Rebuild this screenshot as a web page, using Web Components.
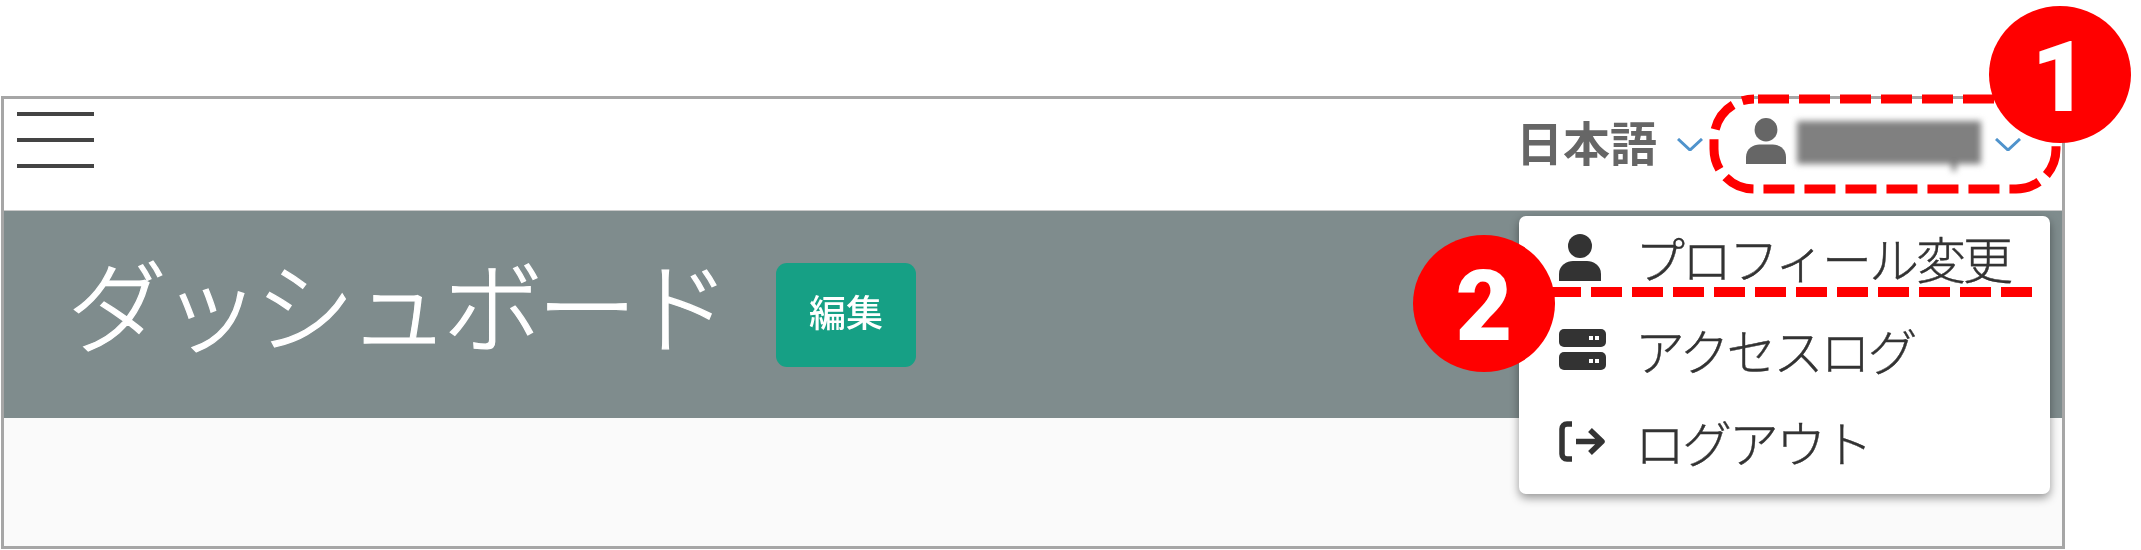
<!DOCTYPE html>
<html lang="ja"><head><meta charset="utf-8"><title>ダッシュボード</title>
<style>
html,body{margin:0;background:#fff}
body{width:2141px;height:550px;overflow:hidden;position:relative;font-family:"Noto Sans CJK JP","Noto Sans",sans-serif}
</style></head><body>
<shot-figure>
  <app-frame>
    <top-nav slot="nav" lang-label="日本語"></top-nav>
    <page-band slot="band" heading="ダッシュボード" action="編集"></page-band>
    <drop-menu slot="menu">
      <menu-row icon="user">プロフィール変更</menu-row>
      <menu-row icon="server">アクセスログ</menu-row>
      <menu-row icon="logout">ログアウト</menu-row>
    </drop-menu>
  </app-frame>
  <dash-ring slot="marks"></dash-ring>
  <dash-line slot="marks"></dash-line>
  <call-out slot="marks" style="left:1989px;top:6px">1</call-out>
  <call-out slot="marks" style="left:1413px;top:235px">2</call-out>
</shot-figure>
<script>
function def(name, css, html){
  customElements.define(name, class extends HTMLElement{
    constructor(){super();this.attachShadow({mode:'open'});
      this.shadowRoot.innerHTML='<style>'+css+'</style>'+(typeof html==='function'?html(this):html);}
  });
}
const ICONS={
 user:'<svg viewBox="0 0 42 47" width="42" height="47" preserveAspectRatio="none"><ellipse cx="21" cy="12" rx="12" ry="12" fill="currentColor"/><path d="M0 47V40C0 31 8 27 14 27H28C34 27 42 31 42 40V47Z" fill="currentColor"/></svg>',
 server:'<svg viewBox="0 0 47 41" width="47" height="41"><rect width="47" height="18" rx="5" fill="currentColor"/><rect y="23" width="47" height="18" rx="5" fill="currentColor"/><g fill="#fff"><rect x="30" y="7" width="4" height="4"/><rect x="36" y="7" width="4" height="4"/><rect x="30" y="30" width="4" height="4"/><rect x="36" y="30" width="4" height="4"/></g></svg>',
 logout:'<svg viewBox="0 0 47 41" width="47" height="41" fill="none" stroke="currentColor" stroke-width="5.500"><path d="M13 3H8C5 3 3 5 3 8V33C3 36 5 38 8 38H13"/><path d="M17 20.500H43M31 9L43 20.500L31 32" stroke-linejoin="round"/></svg>'
};
const CHEV='<svg viewBox="0 0 26 13" width="26" height="13" fill="none" stroke="#4f93cc" stroke-width="3"><path d="M1 1L13 12L25 1"/></svg>';

def('shot-figure',':host{display:block;width:2141px;height:550px;padding-top:96px;padding-left:1px;box-sizing:border-box;position:relative}',
 '<slot></slot><slot name="marks"></slot>');

def('app-frame',`:host{display:flex;flex-direction:column;position:relative;width:2064px;height:453px;box-sizing:border-box;border:3px solid #a6a6a6;background:#fafafa;filter:blur(.6px)}
 ::slotted([slot=menu]){position:absolute;right:12px;top:117px}`,
 '<slot name="nav"></slot><slot name="band"></slot><slot name="menu"></slot>');

def('top-nav',`:host{display:flex;align-items:flex-start;height:112px;background:#fff;box-sizing:border-box;padding:13px 41px 0 13px;flex:none;border-bottom:1px solid #c9c9c9}
 .burger{display:flex;flex-direction:column;gap:22px;width:77px;flex:none}
 .burger i{display:block;height:4px;background:#444}
 .right{margin-left:auto;display:flex;align-items:center;height:56px;margin-top:1px}
 .lang{font-size:47px;font-weight:700;color:#666;line-height:56px}
 .c1{margin-left:20px;display:flex;margin-top:6px}
 .who{margin-left:43px;color:#666;display:flex}
 .name{margin-left:11px;width:184px;height:43px;background:#808080;filter:blur(3px);position:relative;top:1px}
 .tail{position:absolute;left:155px;top:40px;width:4px;height:10px;background:#666}
 .c2{margin-left:14px;display:flex;margin-top:6px}`,
 t=>`<div class="burger"><i></i><i></i><i></i></div>
 <div class="right"><span class="lang">${t.getAttribute('lang-label')}</span><span class="c1">${CHEV}</span>
 <span class="who">${ICONS.user.replace(/width="42" height="47"/,'width="40" height="46"')}</span><div class="name"><i class="tail"></i></div><span class="c2">${CHEV}</span></div>`);

def('page-band',`:host{display:flex;align-items:center;height:207px;flex:none;background:#7f8c8d;color:#fff;box-sizing:border-box;padding-left:63px}
 h1{margin:0 0 26px;font-size:100px;font-weight:300;line-height:1.2;letter-spacing:-6px;white-space:nowrap;-webkit-text-stroke:1.2px #fff}
 button{all:unset;margin-left:51px;width:140px;height:104px;display:flex;align-items:center;justify-content:center;background:#16a085;border-radius:11px;font-size:37px;font-weight:500;color:#fff;padding-bottom:8px;box-sizing:border-box;letter-spacing:0}`,
 t=>`<h1>${t.getAttribute('heading')}</h1><button>${t.getAttribute('action')}</button>`);

def('drop-menu',`:host{display:flex;flex-direction:column;gap:10px;width:531px;height:278px;box-sizing:border-box;background:#fff;border-radius:7px;box-shadow:0 4px 10px rgba(0,0,0,.4);padding-bottom:12px}`,
 '<slot></slot>');

def('menu-row',`:host{display:flex;align-items:center;height:82px;padding-left:40px;font-size:50px;font-weight:300;letter-spacing:-3px;color:#333;line-height:1;white-space:nowrap;-webkit-text-stroke:.4px #333}
 .ic{width:48px;margin-right:28px;display:flex;flex:none}`,
 t=>`<span class="ic">${ICONS[t.getAttribute('icon')]}</span><slot></slot>`);

def('dash-ring',`:host{position:absolute;left:1708px;top:93px;display:block;width:354px;height:102px}
 svg{display:block}`,
 '<svg width="354" height="102" fill="none" stroke="#f00" stroke-width="9" stroke-dasharray="31 10"><rect x="6" y="6" width="342" height="90" rx="40" ry="40" stroke-dashoffset="-4"/></svg>');

def('dash-line',`:host{position:absolute;left:1540px;top:287px;display:block;width:492px;height:10px}
 svg{display:block}`,
 '<svg width="492" height="10"><path d="M492 5H0" stroke="#f00" stroke-width="10" stroke-dasharray="31 10"/></svg>');

def('call-out',`:host{position:absolute;display:flex;align-items:center;justify-content:center;width:142px;height:137px;box-sizing:border-box;padding-top:6px;border-radius:50%;background:#f00;color:#fff;font:900 98px/1 Roboto,"Liberation Sans",sans-serif}`,
 '<slot></slot>');
</script>
</body></html>
